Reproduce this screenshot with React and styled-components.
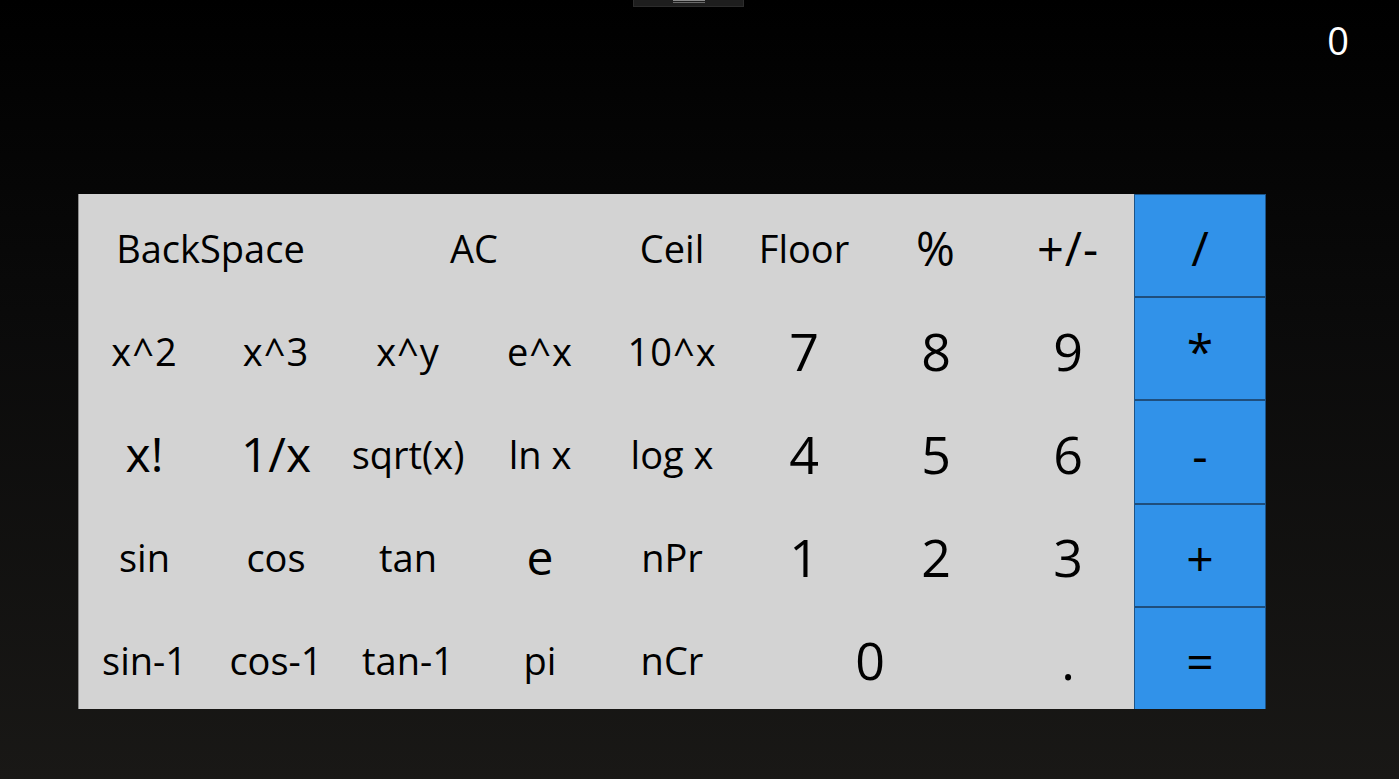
import React from "react";
import styled, { createGlobalStyle } from "styled-components";

const GlobalStyle = createGlobalStyle`
  html, body { margin: 0; padding: 0; height: 100%; }
  body { background: #000; font-family: "Open Sans", "Noto Sans", sans-serif; }
  #root { height: 100%; }
`;

const Page = styled.div`
  position: relative;
  height: 779px;
  box-sizing: border-box;
  background: linear-gradient(180deg, #000000 0%, #0a0a0a 40%, #191816 100%);
  display: flex;
  flex-direction: column;
  overflow: hidden;
`;

const TopHandle = styled.div`
  position: absolute;
  top: 0;
  left: 633px;
  width: 111px;
  height: 7px;
  background: #1e1e1e;
  border: 1px solid #2c2c2c;
  border-top: none;
  box-sizing: border-box;
  display: flex;
  justify-content: center;
`;

const Grip = styled.div`
  width: 32px;
  height: 3px;
  border-top: 1px solid #8a8a8a;
  border-bottom: 1px solid #6a6a6a;
  box-sizing: border-box;
`;

const Header = styled.div`
  height: 194px;
  display: flex;
  justify-content: flex-end;
  align-items: flex-start;
  padding: 16px 50px 0 0;
  box-sizing: border-box;
`;

const Display = styled.div`
  color: #fff;
  font-size: 38px;
  line-height: 48px;
`;

const Keypad = styled.div`
  margin-left: 78px;
  display: grid;
  grid-template-columns: 1056px 132px;
  width: 1188px;
  height: 515px;
`;

const Panel = styled.div`
  background: #d3d3d3;
  border-left: 1px solid #8c8c8c;
  box-sizing: border-box;
  display: grid;
  grid-template-columns: 131px repeat(7, 132px);
  grid-template-rows: repeat(5, 103px);
`;

const sizes = {
  title: [38, 0],
  symbol: [47, 1],
  digit: [52, 0],
  caret: [38, 1],
  small: [38, 0],
  mid: [38, 0],
  big: [48, 0],
};

const Key = styled.button`
  grid-column: span ${(p) => p.$span || 1};
  background: transparent;
  border: none;
  margin: 0;
  padding: 4px 0 0;
  color: #000;
  font-family: "Open Sans", "Noto Sans", sans-serif;
  font-size: ${(p) => sizes[p.$size][0]}px;
  letter-spacing: ${(p) => sizes[p.$size][1]}px;
  display: flex;
  align-items: center;
  justify-content: center;
  box-sizing: border-box;
  cursor: pointer;
`;

const OpsColumn = styled.div`
  display: flex;
  flex-direction: column;
  background: #3192e9;
  border: 1px solid #1d5488;
  border-bottom: none;
  box-sizing: border-box;
`;

const OpKey = styled.button`
  flex: 1;
  background: #3192e9;
  border: none;
  border-top: ${(p) => (p.$first ? "none" : "2px solid #1f4e7c")};
  margin: 0;
  padding: 4px 0 0;
  color: #000;
  font-family: "Open Sans", "Noto Sans", sans-serif;
  font-size: 48px;
  display: flex;
  align-items: center;
  justify-content: center;
  cursor: pointer;
`;

const keys = [
  ["BackSpace", 2, "title"],
  ["AC", 2, "title"],
  ["Ceil", 1, "title"],
  ["Floor", 1, "title"],
  ["%", 1, "symbol"],
  ["+/-", 1, "symbol"],
  ["x^2", 1, "caret"],
  ["x^3", 1, "caret"],
  ["x^y", 1, "caret"],
  ["e^x", 1, "caret"],
  ["10^x", 1, "caret"],
  ["7", 1, "digit"],
  ["8", 1, "digit"],
  ["9", 1, "digit"],
  ["x!", 1, "big"],
  ["1/x", 1, "big"],
  ["sqrt(x)", 1, "mid"],
  ["ln x", 1, "mid"],
  ["log x", 1, "mid"],
  ["4", 1, "digit"],
  ["5", 1, "digit"],
  ["6", 1, "digit"],
  ["sin", 1, "mid"],
  ["cos", 1, "mid"],
  ["tan", 1, "mid"],
  ["e", 1, "big"],
  ["nPr", 1, "small"],
  ["1", 1, "digit"],
  ["2", 1, "digit"],
  ["3", 1, "digit"],
  ["sin-1", 1, "mid"],
  ["cos-1", 1, "mid"],
  ["tan-1", 1, "mid"],
  ["pi", 1, "mid"],
  ["nCr", 1, "small"],
  ["0", 2, "digit"],
  [".", 1, "digit"],
];

const ops = ["/", "*", "-", "+", "="];

export default function App() {
  return (
    <>
      <GlobalStyle />
      <Page>
        <TopHandle>
          <Grip />
        </TopHandle>
        <Header>
          <Display>0</Display>
        </Header>
        <Keypad>
          <Panel>
            {keys.map(([label, span, size], i) => (
              <Key key={i} $span={span} $size={size}>
                {label}
              </Key>
            ))}
          </Panel>
          <OpsColumn>
            {ops.map((op, i) => (
              <OpKey key={op} $first={i === 0}>
                {op}
              </OpKey>
            ))}
          </OpsColumn>
        </Keypad>
      </Page>
    </>
  );
}
